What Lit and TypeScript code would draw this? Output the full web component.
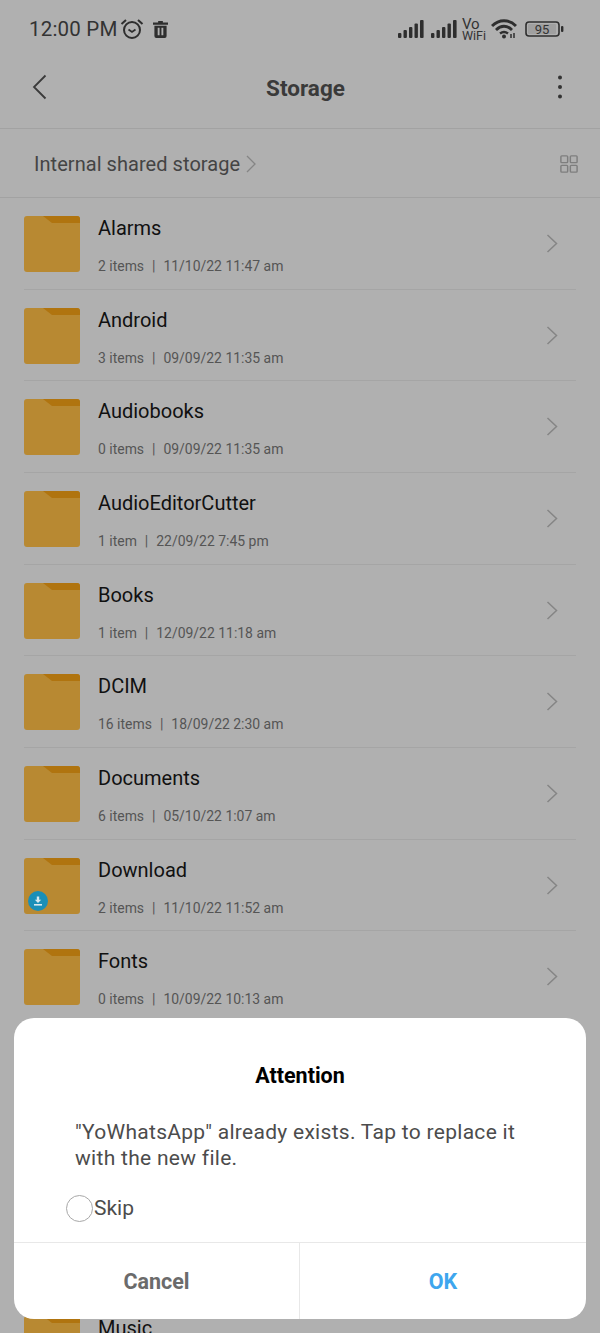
import { LitElement, html, css, svg } from 'lit';
import { customElement } from 'lit/decorators.js';

interface Folder {
  name: string;
  meta?: string;
  date?: string;
  download?: boolean;
}

const FOLDERS: Folder[] = [
  { name: 'Alarms', meta: '2 items', date: '11/10/22 11:47 am' },
  { name: 'Android', meta: '3 items', date: '09/09/22 11:35 am' },
  { name: 'Audiobooks', meta: '0 items', date: '09/09/22 11:35 am' },
  { name: 'AudioEditorCutter', meta: '1 item', date: '22/09/22 7:45 pm' },
  { name: 'Books', meta: '1 item', date: '12/09/22 11:18 am' },
  { name: 'DCIM', meta: '16 items', date: '18/09/22 2:30 am' },
  { name: 'Documents', meta: '6 items', date: '05/10/22 1:07 am' },
  { name: 'Download', meta: '2 items', date: '11/10/22 11:52 am', download: true },
  { name: 'Fonts', meta: '0 items', date: '10/09/22 10:13 am' },
];

const signal = svg`
  <rect x="0" y="13" width="3.4" height="5" rx="1"></rect>
  <rect x="5.5" y="10" width="3.4" height="8" rx="1"></rect>
  <rect x="11" y="7" width="3.4" height="11" rx="1"></rect>
  <rect x="16.5" y="3.5" width="3.4" height="14.5" rx="1"></rect>
  <rect x="22" y="0" width="3.6" height="18" rx="1"></rect>
`;

@customElement('app-root')
export class AppRoot extends LitElement {
  static styles = css`
    :host {
      display: block;
      width: 600px;
      height: 1333px;
      position: relative;
      overflow: hidden;
      background: #b0b0b0;
      font-family: Roboto, 'Liberation Sans', sans-serif;
    }
    .status {
      height: 58px;
      display: flex;
      align-items: center;
      padding: 0 36px 0 29px;
      box-sizing: border-box;
    }
    .time {
      font-size: 20.5px;
      letter-spacing: 0.2px;
      color: #333;
      margin-right: 2px;
    }
    .spacer { flex: 1; }
    .status svg { display: block; fill: #2e2e2e; }
    .nofill { fill: none !important; }
    .trash { margin-left: 9px; }
    .signal { margin-right: 7px; }
    .vo {
      display: flex;
      flex-direction: column;
      margin: 0 5px 0 -2px;
      color: #333;
    }
    .vo span { font-size: 12.5px; line-height: 11px; }
    .vo span:first-child { font-size: 15px; line-height: 12px; }
    .batt { margin-left: 8px; }
    .appbar {
      height: 70px;
      display: flex;
      align-items: center;
      padding: 0 38px 0 30px;
      border-bottom: 1px solid #a2a2a2;
    }
    .appbar svg { display: block; margin-bottom: 12px; }
    .appbar h1 {
      flex: 1;
      margin: 0 0 11px;
      padding-left: 5px;
      text-align: center;
      font-size: 22.5px;
      font-weight: 700;
      color: #3a3a3a;
    }
    .crumbs {
      height: 69px;
      display: flex;
      align-items: center;
      padding: 1px 22px 0 34px;
      box-sizing: border-box;
      border-bottom: 1px solid #a2a2a2;
      color: #444;
      font-size: 20px;
      letter-spacing: 0.05px;
    }
    .crumbs span { margin-right: 6px; }
    .crumbs .grid { margin-left: auto; }
    .row {
      height: 91.67px;
      box-sizing: border-box;
      margin: 0 24px;
      border-bottom: 1px solid #a5a5a5;
      display: flex;
      align-items: flex-start;
    }
    .folder {
      position: relative;
      width: 56px;
      height: 56px;
      margin-top: 18px;
      flex: none;
    }
    .folder svg { display: block; }
    .folder .badge {
      position: absolute;
      left: 4px;
      bottom: 3px;
      width: 20px;
      height: 20px;
    }
    .text {
      margin-left: 18px;
      flex: 1;
      padding-top: 17px;
    }
    .name {
      font-size: 20px;
      line-height: 26px;
      color: #111;
    }
    .meta {
      margin-top: 15px;
      font-size: 13.95px;
      line-height: 20px;
      color: #555;
      display: flex;
    }
    .meta i {
      font-style: normal;
      margin: 0 8px;
    }
    .chev {
      margin: 36px 18px 0 0;
      display: block;
    }
    .gap { height: 275px; }
    .dialog {
      position: absolute;
      left: 14px;
      top: 1018px;
      width: 572px;
      height: 301px;
      background: #fff;
      border-radius: 20px;
      display: flex;
      flex-direction: column;
    }
    .dialog h2 {
      margin: 45px 0 0;
      height: 26px;
      line-height: 26px;
      text-align: center;
      font-size: 21.5px;
      font-weight: 700;
      color: #000;
    }
    .dialog p {
      margin: 30px 60px 0 61px;
      font-size: 21px;
      line-height: 26px;
      color: #4c4c4c;
      letter-spacing: 0.29px;
    }
    .skip {
      display: flex;
      align-items: center;
      margin: 23px 0 0 52px;
      height: 28px;
      font-size: 21px;
      color: #4c4c4c;
    }
    .radio {
      width: 27px;
      height: 27px;
      box-sizing: border-box;
      border: 1px solid #a8a8a8;
      border-radius: 50%;
      margin-right: 1px;
    }
    .actions {
      margin-top: auto;
      height: 76px;
      display: flex;
      border-top: 1px solid #e8e8e8;
    }
    .actions div {
      display: flex;
      align-items: center;
      justify-content: center;
      font-size: 21.5px;
      font-weight: 700;
    }
    .cancel {
      width: 285px;
      color: #6b6b6b;
      border-right: 1px solid #e8e8e8;
    }
    .ok {
      flex: 1;
      color: #3ea6ee;
    }
  `;

  private renderRow(f: Folder) {
    return html`<div class="row">
      <div class="folder">
        <svg width="56" height="56" viewBox="0 0 56 56">
          <rect width="56" height="56" rx="3" fill="#b88932"></rect>
          <path d="M19 0H53a3 3 0 0 1 3 3V7H28Z" fill="#b0740f"></path>
        </svg>
        ${f.download
          ? html`<svg class="badge" viewBox="0 0 20 20">
              <circle cx="10" cy="10" r="10" fill="#1a8fb8"></circle>
              <path d="M8.8 5.5h2.4v3.2h2L10 12 6.8 8.7h2Z" fill="#d8e8ee"></path>
              <rect x="6" y="13" width="8" height="1.6" fill="#d8e8ee"></rect>
            </svg>`
          : null}
      </div>
      <div class="text">
        <div class="name">${f.name}</div>
        ${f.meta ? html`<div class="meta">${f.meta}<i>|</i>${f.date}</div>` : null}
      </div>
      <svg class="chev" width="12" height="19" viewBox="0 0 12 19" fill="none">
        <path d="M1.5 1L10.5 9.5L1.5 18" stroke="#858585" stroke-width="1.5"></path>
      </svg>
    </div>`;
  }

  render() {
    return html`
      <div class="status">
        <span class="time">12:00 PM</span>
        <svg class="nofill" width="24" height="22" viewBox="0 0 24 22" fill="none">
          <circle cx="12" cy="12" r="8" stroke="#2e2e2e" stroke-width="2"></circle>
          <path d="M8.5 11.5L12 14l3.5-2.5" stroke="#2e2e2e" stroke-width="1.8"></path>
          <path d="M1.5 6L6 2M22.5 6L18 2" stroke="#2e2e2e" stroke-width="2"></path>
        </svg>
        <svg class="trash" width="15" height="17" viewBox="0 0 16 18">
          <path d="M5.5 0h5v1.6H16v2.2H0V1.6h5.5ZM1.5 5h13v11a2 2 0 0 1-2 2h-9a2 2 0 0 1-2-2ZM5 7v8h2V7Zm4 0v8h2V7Z" fill-rule="evenodd"></path>
        </svg>
        <span class="spacer"></span>
        <svg class="signal" width="26" height="18" viewBox="0 0 26 18">${signal}</svg>
        <svg class="signal" width="26" height="18" viewBox="0 0 26 18">${signal}</svg>
        <div class="vo"><span>Vo</span><span>WiFi</span></div>
        <svg class="nofill" width="26" height="20" viewBox="0 0 26 20">
          <path d="M1 7C8 0 18 0 25 7" stroke="#2e2e2e" stroke-width="3"></path>
          <path d="M5 11C10 6 16 6 21 11" stroke="#2e2e2e" stroke-width="2.8"></path>
          <path d="M9 14.5C11.5 12.5 14.5 12.5 17 14.5" stroke="#2e2e2e" stroke-width="2.4"></path>
          <circle cx="13" cy="17.5" r="2" fill="#2e2e2e"></circle>
          <path d="M20 15v4M23 14v5" stroke="#2e2e2e" stroke-width="1.5"></path>
        </svg>
        <svg class="batt nofill" width="39" height="16" viewBox="0 0 39 16">
          <rect x="1" y="1" width="33" height="14" rx="3" stroke="#2e2e2e" stroke-width="1.6"></rect>
          <rect x="3" y="3" width="28" height="10" rx="1" fill="#a0a0a0"></rect>
          <rect x="36" y="5" width="2.4" height="6" rx="1" fill="#2e2e2e"></rect>
          <text x="17" y="13" font-size="13" text-anchor="middle" fill="#333" font-family="Roboto">95</text>
        </svg>
      </div>
      <div class="appbar">
        <svg width="18" height="26" viewBox="0 0 18 26" fill="none">
          <path d="M15.5 1.5L4 13l11.5 11.5" stroke="#3a3a3a" stroke-width="1.8"></path>
        </svg>
        <h1>Storage</h1>
        <svg width="4" height="24" viewBox="0 0 4 24" fill="#333">
          <circle cx="2" cy="2.5" r="2"></circle>
          <circle cx="2" cy="12" r="2"></circle>
          <circle cx="2" cy="21.5" r="2"></circle>
        </svg>
      </div>
      <div class="crumbs">
        <span>Internal shared storage</span>
        <svg width="11" height="18" viewBox="0 0 11 18" fill="none">
          <path d="M1 1l8 8-8 8" stroke="#858585" stroke-width="1.3"></path>
        </svg>
        <svg class="grid" width="18" height="18" viewBox="0 0 20 20" fill="none" stroke="#7e7e7e" stroke-width="1.6">
          <rect x="1" y="1" width="7.5" height="7.5" rx="1"></rect>
          <rect x="11.5" y="1" width="7.5" height="7.5" rx="1"></rect>
          <rect x="1" y="11.5" width="7.5" height="7.5" rx="1"></rect>
          <rect x="11.5" y="11.5" width="7.5" height="7.5" rx="1"></rect>
        </svg>
      </div>
      ${FOLDERS.map((f) => this.renderRow(f))}
      <div class="gap"></div>
      ${this.renderRow({ name: 'Music' })}
      <div class="dialog">
        <h2>Attention</h2>
        <p>"YoWhatsApp" already exists. Tap to replace it with the new file.</p>
        <div class="skip"><span class="radio"></span>Skip</div>
        <div class="actions">
          <div class="cancel">Cancel</div>
          <div class="ok">OK</div>
        </div>
      </div>
    `;
  }
}
